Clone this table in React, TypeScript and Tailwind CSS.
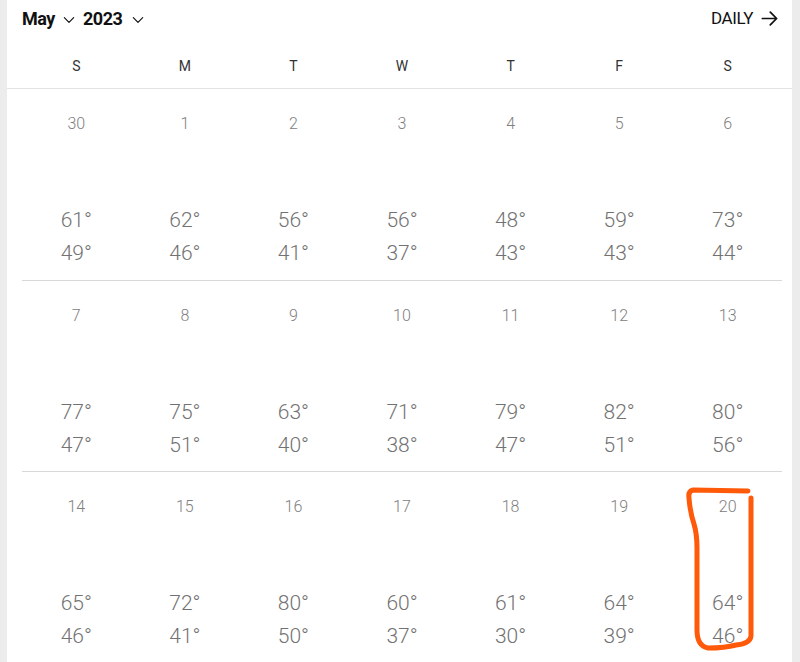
import React from "react";

type Day = { d: number; hi: number; lo: number };

const weeks: Day[][] = [
  [
    { d: 30, hi: 61, lo: 49 },
    { d: 1, hi: 62, lo: 46 },
    { d: 2, hi: 56, lo: 41 },
    { d: 3, hi: 56, lo: 37 },
    { d: 4, hi: 48, lo: 43 },
    { d: 5, hi: 59, lo: 43 },
    { d: 6, hi: 73, lo: 44 },
  ],
  [
    { d: 7, hi: 77, lo: 47 },
    { d: 8, hi: 75, lo: 51 },
    { d: 9, hi: 63, lo: 40 },
    { d: 10, hi: 71, lo: 38 },
    { d: 11, hi: 79, lo: 47 },
    { d: 12, hi: 82, lo: 51 },
    { d: 13, hi: 80, lo: 56 },
  ],
  [
    { d: 14, hi: 65, lo: 46 },
    { d: 15, hi: 72, lo: 41 },
    { d: 16, hi: 80, lo: 50 },
    { d: 17, hi: 60, lo: 37 },
    { d: 18, hi: 61, lo: 30 },
    { d: 19, hi: 64, lo: 39 },
    { d: 20, hi: 64, lo: 46 },
  ],
];

const dow = ["S", "M", "T", "W", "T", "F", "S"];

function Chevron() {
  return (
    <svg width="14" height="14" viewBox="0 0 24 24" fill="none" stroke="currentColor" strokeWidth="2" strokeLinecap="round" strokeLinejoin="round">
      <path d="M4 8l8 8 8-8" />
    </svg>
  );
}

export default function App() {
  return (
    <div className="relative h-[662px] w-[800px] overflow-hidden bg-[#ececec] font-['Roboto',sans-serif]">
      <div className="ml-[7px] h-full w-[785px] bg-white">
        {/* header */}
        <div className="flex h-[37px] items-center justify-between pl-[15px] pr-[13px] text-[#111]">
          <div className="flex items-center text-[18px] font-bold tracking-tight">
            <span>May</span>
            <span className="ml-[7px] mt-[2px]"><Chevron /></span>
            <span className="ml-[7px]">2023</span>
            <span className="ml-[8px] mt-[2px]"><Chevron /></span>
          </div>
          <div className="flex items-center gap-[7px] text-[17px] tracking-tight">
            <span>DAILY</span>
            <svg width="19" height="19" viewBox="0 0 24 24" fill="none" stroke="currentColor" strokeWidth="2.2" strokeLinecap="round" strokeLinejoin="round">
              <path d="M3 12h18M13 4l8 8-8 8" />
            </svg>
          </div>
        </div>
        <div className="grid grid-cols-7 pb-[12px] pl-[15px] pr-[10px] pt-[19px] text-center text-[14px] leading-[20px] text-[#333]">
          {dow.map((l, i) => (
            <div key={i}>{l}</div>
          ))}
        </div>
        <div className="border-t border-[#e2e2e2]" />
        <div className="pl-[15px] pr-[10px] font-light text-[#727272]">
          {weeks.map((w, wi) => (
            <div key={wi} className={`grid h-[191px] grid-cols-7 ${wi > 0 ? "border-t border-[#d8d8d8]" : ""}`}>
              {w.map((day) => (
                <div key={day.d} className="flex flex-col items-center">
                  <div className="mt-[25px] text-[16px] leading-[20px] text-[#808080]">{day.d}</div>
                  <div className="mt-[70px] text-[21px] leading-[33px]">{day.hi}°</div>
                  <div className="text-[21px] leading-[33px]">{day.lo}°</div>
                </div>
              ))}
            </div>
          ))}
        </div>
      </div>
      {/* hand-drawn highlight */}
      <svg className="pointer-events-none absolute left-0 top-0" width="800" height="662" fill="none" stroke="#ff5a0a" strokeWidth="5" strokeLinecap="round" strokeLinejoin="round">
        <path d="M748 491 L693 490 Q688 491 689 498 Q690 512 694 524 Q697 534 697 548 L697 630 Q697 646 708 648 Q725 648 736 645 Q750 644 751 636 L751 498" />
      </svg>
    </div>
  );
}
